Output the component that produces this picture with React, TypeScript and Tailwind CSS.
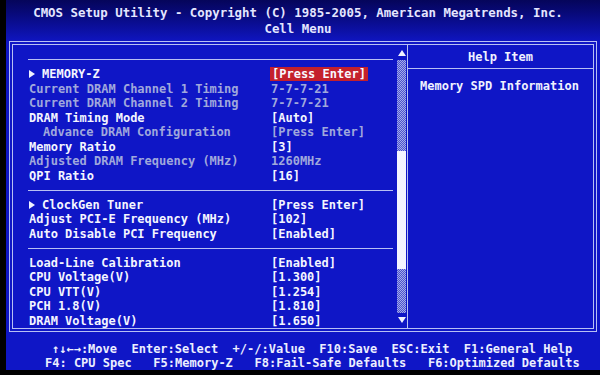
import React from "react";

type Row =
  | { kind: "sep" }
  | { kind: "item"; label: string; value: string; arrow?: boolean; dim?: boolean; indent?: boolean; hi?: boolean };

const rows: Row[] = [
  { kind: "sep" },
  { kind: "item", label: "MEMORY-Z", value: "[Press Enter]", arrow: true, hi: true },
  { kind: "item", label: "Current DRAM Channel 1 Timing", value: "7-7-7-21", dim: true },
  { kind: "item", label: "Current DRAM Channel 2 Timing", value: "7-7-7-21", dim: true },
  { kind: "item", label: "DRAM Timing Mode", value: "[Auto]" },
  { kind: "item", label: "Advance DRAM Configuration", value: "[Press Enter]", dim: true, indent: true },
  { kind: "item", label: "Memory Ratio", value: "[3]" },
  { kind: "item", label: "Adjusted DRAM Frequency (MHz)", value: "1260MHz", dim: true },
  { kind: "item", label: "QPI Ratio", value: "[16]" },
  { kind: "sep" },
  { kind: "item", label: "ClockGen Tuner", value: "[Press Enter]", arrow: true },
  { kind: "item", label: "Adjust PCI-E Frequency (MHz)", value: "[102]" },
  { kind: "item", label: "Auto Disable PCI Frequency", value: "[Enabled]" },
  { kind: "sep" },
  { kind: "item", label: "Load-Line Calibration", value: "[Enabled]" },
  { kind: "item", label: "CPU Voltage(V)", value: "[1.300]" },
  { kind: "item", label: "CPU VTT(V)", value: "[1.254]" },
  { kind: "item", label: "PCH 1.8(V)", value: "[1.810]" },
  { kind: "item", label: "DRAM Voltage(V)", value: "[1.650]" },
];

function SetupRow({ row }: { row: Row }) {
  if (row.kind === "sep") {
    return (
      <div className="h-[14.5px] flex items-center">
        <div className="h-px w-[365px] bg-[#b8c0f4]" />
      </div>
    );
  }
  const tone = row.dim ? "text-[#a0a8dc]" : "text-[#f4f5ff]";
  return (
    <div className="h-[14.5px] flex items-center whitespace-pre leading-[14px]">
      <div className="w-[243px] flex items-center">
        {row.arrow ? (
          <span className="w-[14px] flex items-center pl-[1px]">
            <svg width="6" height="8" viewBox="0 0 6 8">
              <path d="M0 0 L6 4 L0 8 Z" fill="#f0f2ff" />
            </svg>
          </span>
        ) : (
          <span className={row.indent ? "w-[15px]" : "w-px"} />
        )}
        <span className={tone}>{row.label}</span>
      </div>
      {row.hi ? (
        <span className="-ml-[1px] px-[2px] bg-[#c4202c] text-[#f8f8ff]">{row.value}</span>
      ) : (
        <span className={tone}>{row.value}</span>
      )}
    </div>
  );
}

export default function App() {
  return (
    <div className="w-[600px] h-[375px] bg-black overflow-hidden font-['DejaVu_Sans_Mono',monospace] font-bold text-[12px]">
      <div className="ml-[6px] w-[594px] h-[370px] bg-[#0f16c6] flex flex-col">
        <div className="h-[44px] pt-[5px] pr-[10px] text-center text-[12.4px] leading-[16px] text-[#e4e6ff] bg-gradient-to-b from-[#05055a] to-[#0f15c0]">
          <div className="whitespace-pre">CMOS Setup Utility - Copyright (C) 1985-2005, American Megatrends, Inc.</div>
          <div>Cell Menu</div>
        </div>

        <div className="ml-[3px] w-[588px] h-[292px] border border-[#b8c0f4] p-[2px]">
          <div className="h-full border border-[#b8c0f4] flex">
            <div className="w-[394px] flex">
              <div className="flex-1 pl-[15px] pt-[8px]">
                {rows.map((r, i) => (
                  <SetupRow key={i} row={r} />
                ))}
              </div>
              <div className="w-[9px] ml-[3px] mr-[1px] pt-px flex flex-col">
                <div className="h-[14px] flex items-center justify-center">
                  <svg width="8" height="6" viewBox="0 0 8 6">
                    <path d="M4 0 L8 6 L0 6 Z" fill="#f0f2ff" />
                  </svg>
                </div>
                <div className="h-[253px] flex flex-col bg-[repeating-conic-gradient(#a6ace8_0%_25%,#4a52d0_0%_50%)] bg-[length:2px_2px]">
                  <div className="h-[91px]" />
                  <div className="h-[118px] bg-[#f4f5ff]" />
                </div>
                <div className="h-[14px] flex items-center justify-center">
                  <svg width="8" height="6" viewBox="0 0 8 6">
                    <path d="M0 0 L8 0 L4 6 Z" fill="#f0f2ff" />
                  </svg>
                </div>
              </div>
            </div>
            <div className="flex-1 border-l border-[#b8c0f4] flex flex-col">
              <div className="h-[24px] border-b border-[#b8c0f4] flex items-center justify-center text-[#f0f2ff] pt-px">
                Help Item
              </div>
              <div className="pl-[12px] pt-[10px] leading-[15px] text-[#f0f2ff]">Memory SPD Information</div>
            </div>
          </div>
        </div>

        <div className="mt-[10px] leading-[14px] text-[#eceeff] whitespace-pre">
          <div className="pl-[46px]">↑↓←→:Move  Enter:Select  +/-/:Value  F10:Save  ESC:Exit  F1:General Help</div>
          <div className="pl-[39px]">F4: CPU Spec   F5:Memory-Z   F8:Fail-Safe Defaults   F6:Optimized Defaults</div>
        </div>
      </div>
    </div>
  );
}
